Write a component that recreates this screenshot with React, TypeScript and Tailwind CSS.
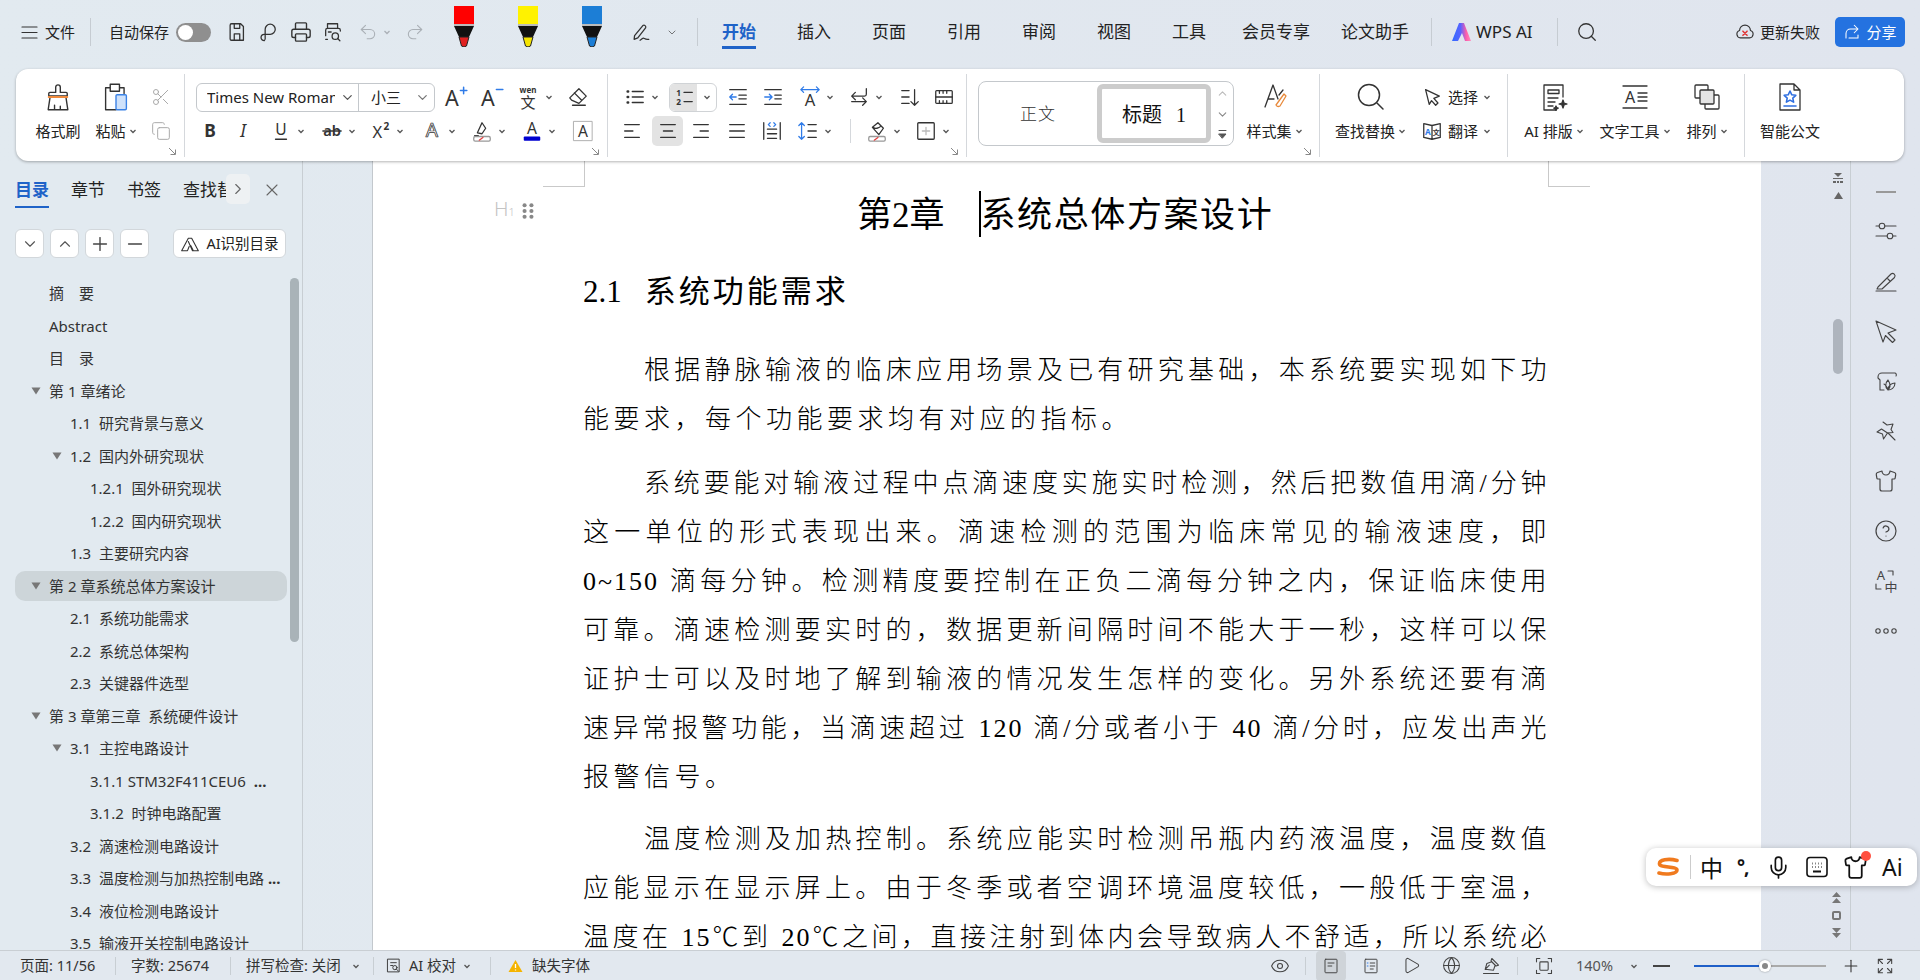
import React from "react";
import { Printer, Scissors, Copy, Undo2, Redo2, Search, X, Plus, Minus, ChevronDown, ChevronUp, ChevronRight, Eye, Play, Globe, CircleHelp, Shirt, Mic } from "lucide-react";

const S = ({ s = 22, v = 24, sw = 1.4, c = "#333", children, cn = "" }: any) => (
  <svg width={s} height={s} viewBox={`0 0 ${v} ${v}`} fill="none" stroke={c} strokeWidth={sw} strokeLinecap="round" strokeLinejoin="round" className={"shrink-0 " + cn}>{children}</svg>
);
const Chev = ({ c = "#555" }: any) => (
  <svg width="8" height="8" viewBox="0 0 8 8" fill="none" stroke={c} strokeWidth="1.3" className="shrink-0"><path d="M1.5 3l2.5 2.5L6.5 3" /></svg>
);
const Corner = () => (
  <svg width="9" height="9" viewBox="0 0 9 9" fill="none" stroke="#888" strokeWidth="1" className="absolute right-[7px] bottom-[1px]"><path d="M1 1l6 6M7.5 2.5v5h-5" /></svg>
);
const T = ({ x = 12, y = 18, f = 18, w = 400, fill = "#333", st = "normal", children, stroke }: any) => (
  <text x={x} y={y} fontSize={f} fontWeight={w} fill={fill} stroke={stroke || "none"} strokeWidth={stroke ? 0.8 : 0} fontStyle={st} textAnchor="middle" fontFamily="'Noto Sans','Noto Sans CJK SC',sans-serif">{children}</text>
);
const IC = ({ cn = "", children }: any) => (
  <div className={"flex items-center gap-[5px] shrink-0 " + cn}>{children}<Chev /></div>
);
const I = ({ cn = "", children }: any) => <div className={"flex items-center justify-center shrink-0 " + cn}>{children}</div>;
const Row = ({ children, cn = "" }: any) => <div className={"flex h-[34px] items-center " + cn}>{children}</div>;
const Lines = ({ d }: any) => <S><path d={d} /></S>;

const Pen = ({ c, tip, cn }: any) => (
  <svg width="20" height="41" viewBox="0 0 20 41" className={"shrink-0 self-start mt-[6px] " + cn}>
    <rect x="0" y="0" width="20" height="18" fill={c} />
    <rect x="0" y="18" width="20" height="2" fill="#bbb" />
    <path d="M0 20h20l-5 11H5z" fill="#111" />
    <path d="M5 31h10l-2.5 9-2.5 1-2.5-1z" fill={tip} stroke="#222" strokeWidth="1" />
  </svg>
);

const Tab = ({ t, cn }: any) => <span className={"text-[17px] leading-[24px] text-[#222] shrink-0 " + cn}>{t}</span>;
const Sep = ({ cn }: any) => <div className={"w-px h-[28px] bg-[#c6ccd2] shrink-0 " + cn} />;

function TopBar() {
  return (
    <div className="flex h-[69px] pb-[5px] items-center text-[15px] text-[#222] shrink-0">
      <S s={17} v={17} sw={1.2} cn="ml-[21px]"><path d="M1 3h15M1 8.500h15M1 14h15" /></S>
      <span className="ml-[7px]">文件</span>
      <Sep cn="ml-[15px]" />
      <span className="ml-[18px]">自动保存</span>
      <div className="ml-[7px] w-[35px] h-[19px] rounded-full bg-[#8f8f8f] flex items-center pl-[2px] shrink-0">
        <div className="w-[15px] h-[15px] rounded-full bg-white" />
      </div>
      <I cn="w-[22px] ml-[15px]"><S><path d="M6 3h10l3 3v15H6a1.500 1.500 0 0 1-1.500-1.500v-15A1.500 1.500 0 0 1 6 3zM9 3v5h6V3M9 21v-7h6v7" /></S></I>
      <I cn="w-[22px] ml-[8px]"><S><path d="M9 21.500a3.500 3.500 0 1 1 0-7h6.500a5.500 5.500 0 1 0-5.500-5.500v9a3.500 3.500 0 0 1-1 3.500z" /></S></I>
      <I cn="w-[22px] ml-[12px]"><Printer size={22} strokeWidth={1.5} color="#333" /></I>
      <I cn="w-[22px] ml-[10px]"><S><path d="M6 8V3h11v5M4 16v-6a2 2 0 0 1 2-2h12a2 2 0 0 1 2 2v1M6 20H4M7 12h3" /><circle cx="14.500" cy="16.500" r="3.500" /><path d="M17 19l2.500 2.500" /></S></I>
      <I cn="w-[22px] ml-[13px]"><Undo2 size={20} strokeWidth={1.3} color="#aab0b6" /></I>
      <div className="ml-[4px]"><Chev c="#aab0b6" /></div>
      <I cn="w-[22px] ml-[13px]"><Redo2 size={20} strokeWidth={1.3} color="#aab0b6" /></I>
      <Pen c="#ff0000" tip="#e02020" cn="ml-[28px]" />
      <Pen c="#fff200" tip="#f5e400" cn="ml-[44px]" />
      <Pen c="#1c7ed6" tip="#1c7ed6" cn="ml-[44px]" />
      <I cn="w-[22px] ml-[28px]"><S><path d="M5 16L14 5a2 2 0 0 1 3 2.500L8.500 18.500 4.500 20zM11 21c2-1 3-3 4.500-2s2 1.500 5 1" /></S></I>
      <I cn="w-[12px] ml-[14px]"><ChevronDown size={15} color="#444" strokeWidth={1.4} /></I>
      <Sep cn="ml-[19px]" />
      <span className="ml-[24px] text-[17px] font-bold leading-[24px] text-[#1f63c8] border-b-[3px] border-[#1f63c8] pb-[2px] self-start mt-[20px] shrink-0">开始</span>
      <Tab t="插入" cn="ml-[41px]" />
      <Tab t="页面" cn="ml-[41px]" />
      <Tab t="引用" cn="ml-[41px]" />
      <Tab t="审阅" cn="ml-[41px]" />
      <Tab t="视图" cn="ml-[41px]" />
      <Tab t="工具" cn="ml-[41px]" />
      <Tab t="会员专享" cn="ml-[36px]" />
      <Tab t="论文助手" cn="ml-[31px]" />
      <Sep cn="ml-[22px]" />
      <svg width="20" height="18" viewBox="0 0 20 18" className="ml-[19px] shrink-0">
        <defs><linearGradient id="wl" x1="0" x2="1" y1="0" y2="0"><stop offset="0" stopColor="#2f6bff" /><stop offset="0.45" stopColor="#5a63ff" /><stop offset="0.75" stopColor="#ff5fa8" /><stop offset="1" stopColor="#ff8fc0" /></linearGradient></defs>
        <path d="M8 0h5l7 18h-6l-3-8-4 8H1z" fill="url(#wl)" />
      </svg>
      <span className="ml-[5px] text-[17px] shrink-0">WPS AI</span>
      <Sep cn="ml-[24px]" />
      <I cn="w-[22px] ml-[18px]"><Search size={22} strokeWidth={1.4} color="#333" /></I>
      <div className="ml-auto flex items-center">
        <S s={20}><path d="M6.500 19a4.500 4.500 0 0 1-1-8.800 6.500 6.500 0 0 1 13 0 4.500 4.500 0 0 1-1 8.800z" /><path d="M9.500 11l5 5M14.500 11l-5 5" stroke="#e03434" strokeWidth="1.800" /></S>
        <span className="ml-[5px] text-[#222]">更新失败</span>
        <div className="ml-[15px] mr-[15px] w-[70px] h-[30px] rounded-[5px] bg-[#2472e0] text-white flex items-center justify-center gap-[5px]">
          <S s={18} c="#fff"><path d="M4 20v-6a6 6 0 0 1 6-6h9M15 3l5 5-5 5M20 16v4H8" /></S>
          <span>分享</span>
        </div>
      </div>
    </div>
  );
}

const G = ({ cn = "", children, noBorder }: any) => (
  <div className={"relative h-[83px] mt-[5px] pt-[6px] shrink-0 " + (noBorder ? "" : "border-r border-[#d5d8dc] ") + cn}>{children}</div>
);
const Col = ({ cn = "", icon, label, chev = true }: any) => (
  <div className={"flex flex-col items-center shrink-0 " + cn}>
    <div className="h-[34px] flex items-center justify-center">{icon}</div>
    <div className="h-[34px] flex items-center gap-[3px] whitespace-nowrap">{label}{chev && <Chev />}</div>
  </div>
);

function Ribbon() {
  return (
    <div className="ml-4 w-[1888px] h-[92px] bg-white rounded-[12px] shadow-[0_1px_3px_rgba(0,0,0,0.3)] flex items-start text-[15px] text-[#222] shrink-0 relative z-10">
      {/* clipboard */}
      <G cn="w-[169px] flex pl-[14px]">
        <Col cn="w-[56px]" chev={false} label="格式刷" icon={
          <S s={30} v={26} sw={1.2}><path d="M11 4.500a2 2 0 0 1 4 0V9h5a1 1 0 0 1 1 1v2H5v-2a1 1 0 0 1 1-1h5zM6 14L4.500 24h17L20 14M10 24v-4M15 24v-3" /><path d="M5 13h16" stroke="#f08a3c" strokeWidth="1.800" /></S>} />
        <Col cn="w-[60px]" label="粘贴" icon={
          <S s={30} v={26} sw={1.2}><path d="M13 24H4V5h4V2h8v3h4v5M8 5v3h8V5" /><rect x="13" y="11" width="9" height="13" rx="1" fill="#cfe2fb" stroke="#3b82e6" /></S>} />
        <div className="w-[30px] flex flex-col items-center">
          <Row><Scissors size={20} strokeWidth={1.2} color="#aaa" /></Row>
          <Row><Copy size={20} strokeWidth={1.2} color="#aaa" /></Row>
        </div>
        <Corner />
      </G>
      {/* font */}
      <G cn="w-[423px]">
        <Row>
          <div className="ml-[11px] w-[239px] h-[29px] border border-[#c4c8cc] rounded-[6px] flex items-center shrink-0">
            <div className="w-[162px] h-full flex items-center border-r border-[#c4c8cc] pl-[10px] shrink-0">
              <span className="w-[128px] overflow-hidden whitespace-nowrap text-[15px]">Times New Roman</span>
              <ChevronDown size={15} color="#555" className="ml-[5px]" />
            </div>
            <span className="ml-[12px] text-[15px]">小三</span>
            <ChevronDown size={15} color="#777" className="ml-[14px]" />
          </div>
          <I cn="w-[30px] ml-[5px]"><S s={28} v={26}><T x={10} y={21} f={20}>A</T><path d="M18 7h6M21 4v6" stroke="#2f7be8" /></S></I>
          <I cn="w-[30px] ml-[6px]"><S s={28} v={26}><T x={10} y={21} f={20}>A</T><path d="M18 6h6" stroke="#2f7be8" /></S></I>
          <div className="ml-[9px] flex items-center gap-[4px] w-[40px] shrink-0">
            <S s={26} v={26}><T x={13} y={9} f={8} w={700}>wen</T><T x={13} y={24} f={15}>文</T></S>
            <Chev />
          </div>
          <I cn="w-[24px] ml-[11px]"><S><path d="M13 3l8 8-8 8-8-3.500-2-2.500zM8 7.500l8 8M6 21h14" /></S></I>
        </Row>
        <Row>
          <I cn="w-[22px] ml-[14px]"><S><T y={18} f={19} w={700} fill="#333">B</T></S></I>
          <I cn="w-[22px] ml-[11px]"><S><T y={18} f={19} st="italic">I</T></S></I>
          <IC cn="ml-[16px]"><S><T y={16} f={17}>U</T><path d="M6 21h12" /></S></IC>
          <IC cn="ml-[16px]"><S><T y={17} f={16} w={600}>ab</T><path d="M2 12h20" /></S></IC>
          <IC cn="ml-[13px]"><S><T x={9} y={20} f={18}>X</T><T x={19} y={11} f={11} w={700}>2</T></S></IC>
          <IC cn="ml-[17px]"><S><T y={19} f={21} fill="#fff" stroke="#333">A</T></S></IC>
          <IC cn="ml-[15px]"><S><path d="M7 14L12 3l4 6-4 6zM4 17h4" /><rect x="3" y="18" width="18" height="5" rx="1.500" stroke="#999" /><path d="M9 22l4-3" stroke="#e04040" /></S></IC>
          <IC cn="ml-[15px]"><S><T y={15} f={17}>A</T><rect x="3" y="18" width="18" height="4.500" rx="1" fill="#0000d0" stroke="none" /></S></IC>
          <I cn="w-[22px] ml-[16px]"><S sw={1}><rect x="2" y="1.500" width="20" height="21" stroke="#aaa" /><T y={18} f={17}>A</T></S></I>
        </Row>
        <Corner />
      </G>
      {/* paragraph */}
      <G cn="w-[359px]">
        <Row>
          <IC cn="ml-[16px]"><S><path d="M9 6h12M9 12h12M9 18h12" /><path d="M4 6h.5M4 12h.5M4 18h.5" strokeWidth="2.800" /></S></IC>
          <div className="ml-[10px] w-[48px] h-[29px] border border-[#d0d3d6] rounded-[6px] flex items-center shrink-0 overflow-hidden">
            <div className="w-[27px] h-full bg-[#e3e3e3] flex items-center justify-center">
              <S s={22}><T x={6} y={11} f={9} w={700}>1</T><T x={6} y={21} f={9} w={700}>2</T><path d="M12 7h9M12 17h9" /></S>
            </div>
            <div className="flex-1 flex justify-center"><Chev /></div>
          </div>
          <I cn="w-[22px] ml-[10px]"><S><path d="M3 4h18M3 20h18M13 10h8M13 14h8" /><path d="M10 12H3M6 9l-3 3 3 3" stroke="#2f7be8" /></S></I>
          <I cn="w-[22px] ml-[13px]"><S><path d="M3 4h18M3 20h18M14 10h7M14 14h7" /><path d="M3 12h8M8 9l3 3-3 3" stroke="#2f7be8" /></S></I>
          <IC cn="ml-[15px]"><S><T y={22} f={18}>A</T><path d="M2 4h20M5 1l-3 3 3 3M19 1l3 3-3 3" stroke="#2f7be8" /></S></IC>
          <IC cn="ml-[14px]"><S><path d="M20 3v6a2 2 0 0 1-2 2H4M8 7l-4 4 4 4M4 17h16M16 13l4 4-4 4" /></S></IC>
          <I cn="w-[22px] ml-[16px]"><S><path d="M3 5h8M3 12h8M3 19h8M17 4v17M13 17l4 4 4-4" /></S></I>
          <I cn="w-[22px] ml-[12px]"><S><rect x="3" y="5" width="18" height="14" rx="1" /><path d="M3 12h18M7 5v3M11 5v3M15 5v3M7 19v-3M11 19v-3M15 19v-3" /></S></I>
        </Row>
        <Row>
          <I cn="w-[22px] ml-[13px]"><Lines d="M4 5h16M4 12h9M4 19h16" /></I>
          <I cn="w-[31px] h-[30px] ml-[9px] bg-[#e3e3e3] rounded-[5px]"><Lines d="M4 5h16M7 12h10M4 19h16" /></I>
          <I cn="w-[22px] ml-[7px]"><Lines d="M4 5h16M11 12h9M4 19h16" /></I>
          <I cn="w-[22px] ml-[14px]"><Lines d="M4 5h16M4 12h16M4 19h16" /></I>
          <I cn="w-[22px] ml-[13px]"><S><path d="M3 3v18M21 3v18M7 20h10M7 15h10M7 10h10" /><path d="M10 3L8 5l2 2M14 3l2 2-2 2" stroke="#2f7be8" /></S></I>
          <IC cn="ml-[14px]"><S><path d="M12 5h9M12 12h9M12 19h9" /><path d="M5 3v18M2 6l3-3 3 3M2 18l3 3 3-3" stroke="#2f7be8" /></S></IC>
          <div className="ml-[18px] w-px h-[24px] bg-[#d5d8dc] shrink-0" />
          <IC cn="ml-[15px]"><S><path d="M7 8l6-5 6 6-5 7zM8 8c2 2 6 1 8-1" /><rect x="3" y="18" width="18" height="5" rx="1.500" stroke="#999" /><path d="M9 22l4-3" stroke="#e04040" /></S></IC>
          <IC cn="ml-[14px]"><S><rect x="3" y="3" width="18" height="18" rx="1" /><path d="M12 8v8M8 12h8" stroke="#bbb" /></S></IC>
        </Row>
        <Corner />
      </G>
      {/* styles */}
      <G cn="w-[353px] flex">
        <div className="ml-[11px] mt-[1px] w-[256px] h-[65px] border border-[#c4c8cc] rounded-[8px] flex items-center shrink-0">
          <div className="w-[118px] pt-[2px] text-center text-[17px] text-[#333] [font-family:'Liberation_Serif','Noto_Sans_CJK_SC',serif] font-light tracking-[1px]">正文</div>
          <div className="w-[114px] h-[59px] border-[5px] border-[#cccccc] rounded-[6px] flex items-center justify-center gap-[14px] text-[20px] text-[#111] pt-[2px] [font-family:'Liberation_Serif','Noto_Sans_CJK_SC',serif] shrink-0"><span>标题</span><span>1</span></div>
          <div className="flex-1 flex flex-col items-center gap-[8px]">
            <ChevronUp size={13} color="#bbb" />
            <ChevronDown size={13} color="#888" />
            <S s={11} v={11} sw={1} c="#555"><path d="M2 1.500h7" /><path d="M2 5h7l-3.500 4z" fill="#555" /></S>
          </div>
        </div>
        <Col cn="w-[81px]" label="样式集" icon={
          <S s={32} v={32} sw={1.3}><path d="M6 26L14 4l5 14M9 18h6" /><path d="M17 24l8-11 2 2-6 10a3 3 0 0 1-4-1z" stroke="#e88a3c" /><path d="M20 14l4-5" /></S>} />
        <Corner />
      </G>
      {/* find */}
      <G cn="w-[188px] flex">
        <Col cn="w-[101px]" label="查找替换" icon={
          <S s={32} v={32} sw={1.5}><circle cx="14" cy="14" r="10.500" /><path d="M22 22l6 6" /></S>} />
        <div className="flex flex-col">
          <Row><I cn="w-[22px]"><S><path d="M5 4l15 7-6 2.500 4.500 5-2.500 2.500-4.500-5L9 20z" /></S></I><span className="ml-[5px]">选择</span><span className="ml-[5px]"><Chev /></span></Row>
          <Row><I cn="w-[22px]"><S><path d="M3 4l9 2v15l-9-2zM12 6l9-2v15l-9 2" /><T x={7.500} y={16} f={9} w={700} fill="#2f7be8">A</T><T x={16.500} y={16} f={8} w={700}>文</T></S></I><span className="ml-[5px]">翻译</span><span className="ml-[5px]"><Chev /></span></Row>
        </div>
      </G>
      {/* tools */}
      <G cn="w-[237px] flex">
        <Col cn="w-[64px] ml-[14px]" label="AI 排版" icon={
          <S s={30} v={30} sw={1.3}><path d="M24 15V3H5v25h12M9 8h11v3.500H9zM9 16h10M9 20h7M9 24h5" /><path d="M24 18l1 3 3 1-3 1-1 3-1-3-3-1 3-1zM17 24l.7 1.500 1.500.7-1.500.7-.7 1.500-.7-1.500-1.500-.7 1.500-.7z" fill="#333" /></S>} />
        <Col cn="w-[76px] ml-[11px]" label="文字工具" icon={
          <S s={30} v={30} sw={1.3}><path d="M3 4h24M3 26h24M18 11h9M18 15h9M18 19h9" /><T x={10} y={21} f={16}>A</T></S>} />
        <Col cn="w-[46px] ml-[11px]" label="排列" icon={
          <S s={30} v={30} sw={1.3}><rect x="3" y="3" width="13" height="13" rx="1" /><rect x="13" y="13" width="14" height="14" rx="1" /><rect x="8" y="8" width="14" height="14" rx="1" fill="#e4e4e4" /></S>} />
      </G>
      <G cn="w-[90px]" noBorder>
        <Col cn="w-[90px]" label="智能公文" chev={false} icon={
          <S s={30} v={30} sw={1.3}><path d="M5 2h14l6 6v20H5zM19 2v6h6" /><path d="M15 9l1.800 3.800 4 .5-3 2.800.8 4-3.600-2-3.600 2 .8-4-3-2.800 4-.5z" stroke="#2f6fe0" strokeWidth="1.600" /><path d="M9 24h12" stroke="#2f6fe0" strokeWidth="1.600" /></S>} />
      </G>
    </div>
  );
}

const toc: [number, string, boolean?, boolean?][] = [
  [1, "摘\u2003要"], [1, "Abstract"], [1, "目\u2003录"], [1, "第 1 章绪论", true],
  [2, "1.1  研究背景与意义"], [2, "1.2  国内外研究现状", true], [3, "1.2.1  国外研究现状"], [3, "1.2.2  国内研究现状"],
  [2, "1.3  主要研究内容"], [1, "第 2 章系统总体方案设计", true], [2, "2.1  系统功能需求"], [2, "2.2  系统总体架构"],
  [2, "2.3  关键器件选型"], [1, "第 3 章第三章  系统硬件设计", true], [2, "3.1  主控电路设计", true], [3, "3.1.1 STM32F411CEU6  ", false, true],
  [3, "3.1.2  时钟电路配置"], [2, "3.2  滴速检测电路设计"], [2, "3.3  温度检测与加热控制电路 ", false, true], [2, "3.4  液位检测电路设计"], [2, "3.5  输液开关控制电路设计"],
];

const SqBtn = ({ children }: any) => (
  <div className="w-[29px] h-[29px] bg-white border border-[#d2d7db] rounded-[6px] flex items-center justify-center shrink-0">{children}</div>
);
const Tri = () => (
  <svg width="10" height="8" viewBox="0 0 10 8" className="shrink-0"><path d="M0.500 0.500h9L5 7.500z" fill="#777" /></svg>
);

function Sidebar() {
  return (
    <div className="w-[303px] border-r border-[#c8ced3] bg-[#e2eaf0] flex flex-col shrink-0 overflow-hidden text-[15px] text-[#333]">
      <div className="flex h-[46px] pt-[13px] pl-[15px] shrink-0 items-start relative">
        <span className="mt-[1px] text-[17px] leading-[30px] font-bold text-[#1f63c8] border-b-[2px] border-[#1f63c8] h-[33px] w-[34px] whitespace-nowrap shrink-0">目录</span>
        <span className="mt-[1px] ml-[22px] text-[17px] leading-[30px] text-[#222] whitespace-nowrap">章节</span>
        <span className="mt-[1px] ml-[22px] text-[17px] leading-[30px] text-[#222] whitespace-nowrap">书签</span>
        <span className="mt-[1px] ml-[22px] w-[43px] overflow-hidden text-[17px] leading-[30px] text-[#222] whitespace-nowrap">查找替换</span>
        <div className="w-[24px] h-[30px] bg-[#eef1f3] rounded-[5px] flex items-center justify-center shrink-0"><ChevronRight size={18} color="#666" strokeWidth={1.5} /></div>
        <X size={20} color="#666" strokeWidth={1.3} className="ml-[12px] mt-[6px]" />
      </div>
      <div className="flex items-center mt-[22px] pl-[15px] shrink-0">
        <SqBtn><ChevronDown size={18} color="#555" strokeWidth={1.5} /></SqBtn>
        <div className="ml-[6px]"><SqBtn><ChevronUp size={18} color="#555" strokeWidth={1.5} /></SqBtn></div>
        <div className="ml-[6px]"><SqBtn><Plus size={22} color="#444" strokeWidth={1.5} /></SqBtn></div>
        <div className="ml-[6px]"><SqBtn><Minus size={22} color="#444" strokeWidth={1.5} /></SqBtn></div>
        <div className="ml-[24px] w-[113px] h-[29px] bg-white border border-[#d2d7db] rounded-[6px] flex items-center justify-center gap-[6px] text-[14.500px] text-[#222] shrink-0">
          <S s={20} sw={1.3}><path d="M2 20L10 5h4l8 15h-7L10 9M3 20h6l2-5M13 14l3 6" /></S>
          <span>AI识别目录</span>
        </div>
      </div>
      <div className="relative flex-1 mt-[19px] overflow-hidden">
        <div className="absolute right-[3px] top-[1px] w-[9px] h-[364px] rounded-full bg-[#a9b3b8]" />
        {toc.map(([lv, t, arrow, dots], i) => {
          const active = i === 9;
          return (
            <div key={i} className={"h-[32.500px] flex items-center"}>
              <div className={"w-[272px] ml-[15px] h-[30px] flex items-center rounded-[10px] shrink-0 " + (active ? "bg-[#cdd5d9]" : "")}>
                {lv === 1 && <div className="w-[16px] ml-[16px] flex shrink-0">{arrow && <Tri />}</div>}
                {lv === 2 && <div className="w-[18px] ml-[37px] flex shrink-0">{arrow && <Tri />}</div>}
                {lv === 3 && <div className="ml-[75px] shrink-0" />}
                <span className={"whitespace-pre " + (lv === 1 ? "ml-[2px]" : "")}>{t}{dots && <b>...</b>}</span>
              </div>
            </div>
          );
        })}
      </div>
    </div>
  );
}

const serif = "[font-family:'Liberation_Serif','Noto_Sans_CJK_SC',serif]";
const Runs = ({ t }: any) => (
  <>
    {t.split(/([0-9~]+)/).map((part: string, i: number) =>
      /^[0-9~]+$/.test(part)
        ? <span key={i} className="tracking-[2px] font-normal">{part}</span>
        : <React.Fragment key={i}>{part}</React.Fragment>
    )}
  </>
);
const L = ({ t, first, last }: any) => (
  <div className={(last ? "tracking-[4.500px] " : "tracking-[2.500px] [text-align:justify] [text-align-last:justify] ") + (first ? "pl-[61px]" : "")}><Runs t={t} /></div>
);
const P = ({ lines, cn = "" }: any) => (
  <div className={"text-[26px] leading-[49px] text-[#000] font-light " + cn}>
    {lines.map((t: string, i: number) => <L key={i} t={t} first={i === 0} last={i === lines.length - 1 && lines.length > 1 && !t.endsWith("必")} />)}
  </div>
);

function Page() {
  return (
    <div className={"w-[1389px] bg-white border-l border-[#c3c8cd] pl-[210px] pr-[212px] pt-[30px] relative overflow-hidden shrink-0 " + serif}>
      <div className="absolute left-[170px] top-0 w-[42px] h-[26px] border-r border-b border-[#c9c9c9]" />
      <div className="absolute left-[1175px] top-0 w-[42px] h-[26px] border-l border-b border-[#c9c9c9]" />
      <div className="absolute left-[121px] top-[36px] flex items-center gap-[5px]">
        <span className="text-[20px] leading-[24px] text-[#c4c4c4] [font-family:'Noto_Sans',sans-serif] font-light">H<span className="text-[11px]">1</span></span>
        <S s={16} v={14} sw={0} c="#888"><g fill="#888"><circle cx="4" cy="2" r="1.800" /><circle cx="10" cy="2" r="1.800" /><circle cx="4" cy="7" r="1.800" /><circle cx="10" cy="7" r="1.800" /><circle cx="4" cy="12" r="1.800" /><circle cx="10" cy="12" r="1.800" /></g></S>
      </div>
      <div className="flex items-center h-[50px] text-[35px] text-[#000] font-normal whitespace-nowrap">
        <span className="ml-[274px]">第2章</span>
        <span className="ml-[34px] h-[46px] w-[2px] bg-black shrink-0 -translate-y-[2px]" />
        <span className="tracking-[1.600px]">系统总体方案设计</span>
      </div>
      <div className="mt-[26px] flex items-center h-[50px] text-[31px] font-normal text-[#000] whitespace-pre">
        <span>2.1</span><span className="ml-[23px] tracking-[3px]">系统功能需求</span>
      </div>
      <P cn="mt-[29px]" lines={["根据静脉输液的临床应用场景及已有研究基础，本系统要实现如下功", "能要求，每个功能要求均有对应的指标。"]} />
      <P cn="mt-[15px]" lines={["系统要能对输液过程中点滴速度实施实时检测，然后把数值用滴/分钟", "这一单位的形式表现出来。滴速检测的范围为临床常见的输液速度，即", "0~150 滴每分钟。检测精度要控制在正负二滴每分钟之内，保证临床使用", "可靠。滴速检测要实时的，数据更新间隔时间不能大于一秒，这样可以保", "证护士可以及时地了解到输液的情况发生怎样的变化。另外系统还要有滴", "速异常报警功能，当滴速超过 120 滴/分或者小于 40 滴/分时，应发出声光", "报警信号。"]} />
      <P cn="mt-[13px]" lines={["温度检测及加热控制。系统应能实时检测吊瓶内药液温度，温度数值", "应能显示在显示屏上。由于冬季或者空调环境温度较低，一般低于室温，", "温度在 15℃到 20℃之间，直接注射到体内会导致病人不舒适，所以系统必"]} />
    </div>
  );
}

function Gutter() {
  return (
    <div className="w-[90px] border-r border-[#c8ced3] flex flex-col items-end pr-[7px] shrink-0 relative">
      <svg width="12" height="12" viewBox="0 0 12 12" fill="#666" className="mt-[11px] mr-[-1px]"><path d="M2 1h8L6 5zM1 6h10v1H1zM1 9h3v2H1zM5 9h2v2H5zM8 9h3v2H8z" /></svg>
      <svg width="9" height="7" viewBox="0 0 9 7" fill="#666" className="mt-[8px] mr-[0px]"><path d="M4.500 0l4.500 7H0z" /></svg>
      <div className="mt-[120px] w-[10px] h-[55px] rounded-full bg-[#aeb4bd]" />
      <div className="mt-auto mb-[11px] flex flex-col items-center gap-[7px] mr-[1px]">
        <svg width="11" height="12" viewBox="0 0 11 12" fill="#777"><path d="M5.500 0l4.500 5H1zM5.500 6l4.500 5H1z" /></svg>
        <div className="w-[9px] h-[9px] border-[2px] border-[#777] rounded-[2px]" />
        <svg width="11" height="12" viewBox="0 0 11 12" fill="#777"><path d="M1 1h9L5.500 6zM1 6h9l-4.500 5z" /></svg>
      </div>
    </div>
  );
}

const RI = ({ children }: any) => <div className="h-[50px] flex items-center justify-center">{children}</div>;

function Rail() {
  return (
    <div className="flex-1 flex flex-col pt-[17px]">
      <div className="h-[28px] flex items-center justify-center"><div className="w-[20px] h-[2px] bg-[#999]" /></div>
      <RI><S s={24} sw={1.1} c="#444"><path d="M2 7h20M2 17h20" /><circle cx="8" cy="7" r="2.800" fill="#e0e5ee" /><circle cx="16" cy="17" r="2.800" fill="#e0e5ee" /></S></RI>
      <RI><S s={24} sw={1.1} c="#444"><path d="M2 22h20M4 18L17 5a2.500 2.500 0 0 1 3.500 3.500L8 20H3zM13 9l3 3" /></S></RI>
      <RI><S s={24} sw={1.1} c="#444"><path d="M2 2l20 9-8 3 7 7-2.500 2.500-7-7L9 23z" /></S></RI>
      <RI><S s={24} sw={1.1} c="#444"><path d="M21 4H8a4 4 0 0 0-4 4v1l2 2v10h4M21 4a2 2 0 0 1 1 3" /><path d="M14 21c-3-2-3-7 0-10 2 3 3 7 0 10zM14 21c3 0 7-2 7-7-3 0-7 2-7 7zM10 15c2 1 3 3 4 6" /></S></RI>
      <RI><S s={24} sw={1.1} c="#444"><path d="M9 3l4 3 6-1-2 5.500 2 3-5 .5M13.500 14L9.500 20l-1-5-5.500-2 4.500-3z" /><path d="M14 14l7 7" /></S></RI>
      <RI><Shirt size={24} strokeWidth={1.2} color="#444" /></RI>
      <RI><CircleHelp size={24} strokeWidth={1.2} color="#444" /></RI>
      <RI><S s={24} sw={1.1} c="#444"><T x={7} y={11} f={13} fill="#444">A</T><T x={17} y={23} f={13} fill="#444">中</T><path d="M14 2h5v4M2 15v5h5" /></S></RI>
      <RI><S s={24} sw={1.1} c="#444"><circle cx="4" cy="12" r="2.200" /><circle cx="12" cy="12" r="2.200" /><circle cx="20" cy="12" r="2.200" /></S></RI>
    </div>
  );
}

function Ime() {
  return (
    <div className="absolute left-[1646px] top-[848px] w-[271px] h-[38px] bg-white rounded-[10px] shadow-[0_1px_6px_rgba(0,0,0,0.25)] flex items-center z-20 text-[#111]">
      <svg width="24" height="20" viewBox="0 0 24 20" fill="none" stroke="#f07a1e" strokeWidth="3.600" strokeLinecap="round" className="ml-[10px] shrink-0"><path d="M21 3.500C12 1 3 3 3.500 7S21 9 21 13 10 18 3 16" /></svg>
      <div className="ml-[10px] w-px h-[24px] bg-[#ccc] shrink-0" />
      <span className="ml-[9px] text-[23px] leading-none [font-family:'Noto_Sans_CJK_SC',sans-serif]">中</span>
      <span className="ml-[14px] w-[16px] text-[19px] leading-none font-bold [font-family:'Noto_Sans',sans-serif] tracking-[-1px]">°,</span>
      <Mic size={25} strokeWidth={1.6} className="ml-[13px] shrink-0" />
      <svg width="22" height="22" viewBox="0 0 22 22" fill="none" stroke="#111" strokeWidth="1.600" className="ml-[15px] shrink-0"><rect x="1" y="1.500" width="20" height="19" rx="3" /><path d="M6 7.500h.5M9 7.500h.5M12.500 7.500h.5M15.500 7.500h.5M6 11h.5M9 11h.5M12.500 11h.5M15.500 11h.5M7 15.500h8" strokeWidth="1.800" /></svg>
      <div className="relative ml-[15px] shrink-0"><Shirt size={25} strokeWidth={1.7} /><div className="absolute -top-[4px] -right-[3px] w-[10px] h-[10px] rounded-full bg-[#ff5040]" /></div>
      <span className="ml-[14px] text-[23px] leading-none [font-family:'Noto_Sans',sans-serif]">Ai</span>
    </div>
  );
}

const VS = ({ cn }: any) => <div className={"w-px h-[18px] bg-[#c8ced3] shrink-0 " + cn} />;

function Status() {
  return (
    <div className="h-[30px] bg-[#e2e8ef] border-t border-[#c9ced3] flex items-center text-[14.500px] text-[#333] shrink-0 whitespace-nowrap">
      <span className="ml-[20px] w-[80px]">页面: 11/56</span>
      <VS cn="ml-[15px]" />
      <span className="ml-[15px] w-[84px]">字数: 25674</span>
      <VS cn="ml-[15px]" />
      <span className="ml-[15px] w-[98px]">拼写检查: 关闭</span>
      <div className="ml-[8px]"><Chev /></div>
      <VS cn="ml-[13px]" />
      <S s={17} sw={1.3} cn="ml-[11px]"><path d="M4 3h16v18H4zM8 8h8M8 12h3" /><circle cx="14" cy="15" r="3" /><path d="M16 17l3 3" /></S>
      <span className="ml-[7px] w-[46px]">AI 校对</span>
      <div className="ml-[8px]"><Chev /></div>
      <VS cn="ml-[19px]" />
      <svg width="15" height="14" viewBox="0 0 15 14" className="ml-[17px] shrink-0"><path d="M7.500 1L14.500 13H.5z" fill="#f5b400" /><path d="M7.500 5v4M7.500 10.500v1" stroke="#fff" strokeWidth="1.300" /></svg>
      <span className="ml-[9px]">缺失字体</span>
      <div className="ml-[680px] flex items-center">
        <Eye size={20} strokeWidth={1.3} color="#444" />
      </div>
      <VS cn="ml-[15px]" />
      <I cn="ml-[10px] w-[30px] h-[30px] bg-[#cfd4d9] rounded-[4px]"><S s={18} sw={1.3} c="#444"><rect x="4" y="3" width="16" height="18" rx="1" /><path d="M8 8h8M8 12h5" /></S></I>
      <I cn="ml-[10px] w-[30px]"><S s={18} sw={1.3} c="#444"><rect x="4" y="3" width="16" height="18" rx="1" /><path d="M11 8h6M11 12h6M11 16h4" /><path d="M7 8h1M7 12h1" stroke="#2f7be8" /></S></I>
      <I cn="ml-[10px] w-[30px]"><Play size={19} strokeWidth={1.3} color="#444" /></I>
      <I cn="ml-[10px] w-[30px]"><Globe size={19} strokeWidth={1.3} color="#444" /></I>
      <I cn="ml-[10px] w-[30px]"><S s={20} sw={1.3} c="#444"><path d="M5 16l2-7 6-2 4 4-2 6zM13 3l8 8-3 1-6-6zM3 21h18M5 16l5-5" /></S></I>
      <VS cn="ml-[11px]" />
      <I cn="ml-[16px] w-[20px]"><S s={20} sw={1.3} c="#444"><path d="M3 7V3h4M17 3h4v4M21 17v4h-4M7 21H3v-4" /><rect x="7" y="7" width="10" height="10" rx="1" /></S></I>
      <span className="ml-[22px] w-[40px] text-[#555]">140%</span>
      <div className="ml-[14px]"><Chev /></div>
      <div className="ml-[15px] w-[17px] h-[2px] bg-[#444] shrink-0" />
      <div className="ml-[24px] w-[132px] h-[2px] bg-[#aaa] relative shrink-0">
        <div className="w-[71px] h-[2px] bg-[#1f5fc8]" />
        <div className="absolute left-[65px] -top-[5px] w-[12px] h-[12px] rounded-full bg-white shadow-[0_0_2px_rgba(0,0,0,0.4)] flex items-center justify-center"><div className="w-[6px] h-[6px] rounded-full bg-[#888]" /></div>
      </div>
      <Plus size={20} strokeWidth={1.3} color="#333" className="ml-[15px] shrink-0" />
      <S s={20} sw={1.3} c="#444" cn="ml-[14px]"><path d="M4 9V4h5M15 4h5v5M20 15v5h-5M9 20H4v-5M5 5l4 4M19 5l-4 4M19 19l-4-4M5 19l4-4" /></S>
    </div>
  );
}

export default function App() {
  return (
    <div className="relative w-[1920px] h-[980px] overflow-hidden flex flex-col bg-gradient-to-r from-[#e2eaf0] to-[#e0e5ee] [font-family:'Noto_Sans','Noto_Sans_CJK_SC',sans-serif]">
      <TopBar />
      <Ribbon />
      <div className="flex flex-1 min-h-0">
        <Sidebar />
        <div className="w-[69px] shrink-0" />
        <Page />
        <Gutter />
        <Rail />
      </div>
      <Status />
      <Ime />
    </div>
  );
}
